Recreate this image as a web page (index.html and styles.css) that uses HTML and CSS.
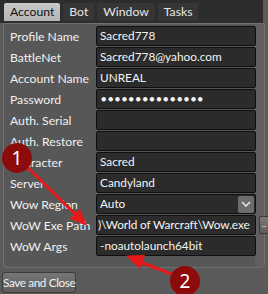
FILE: index.html
```html
<!DOCTYPE html>
<html>
<head>
<meta charset="utf-8">
<link rel="stylesheet" href="styles.css">
</head>
<body>
<div class="window">
  <div class="tabbar">
    <div class="tab active">Account</div>
    <div class="tab">Bot</div>
    <div class="tab">Window</div>
    <div class="tab">Tasks</div>
  </div>
  <div class="panel">
    <div class="form">
      <div class="label">Profile Name</div><div class="field">Sacred778</div><div></div>
      <div class="label">BattleNet</div><div class="field">Sacred778@yahoo.com</div><div></div>
      <div class="label">Account Name</div><div class="field">UNREAL</div><div></div>
      <div class="label">Password</div><div class="field dots">●●●●●●●●●●●●●●●</div><div></div>
      <div class="label">Auth. Serial</div><div class="field"></div><div></div>
      <div class="label">Auth. Restore</div><div class="field"></div><div></div>
      <div class="label">Character</div><div class="field">Sacred</div><div></div>
      <div class="label">Server</div><div class="field">Candyland</div><div></div>
      <div class="label">Wow Region</div>
      <div class="field combo"><span>Auto</span><span class="drop"><svg width="10" height="6" viewBox="0 0 10 6"><path d="M1 1 L5 5 L9 1" fill="none" stroke="#e6e6e6" stroke-width="1.6"/></svg></span></div><div></div>
      <div class="label">WoW Exe Path</div><div class="field path">)\World of Warcraft\Wow.exe</div><div class="browse">...</div>
      <div class="label">WoW Args</div><div class="field">-noautolaunch64bit</div><div></div>
    </div>
  </div>
  <div class="footer">
    <div class="btn">Save and Close</div>
  </div>
  <svg class="annot" width="268" height="294" viewBox="0 0 268 294">
    <g stroke="#e8191a" stroke-width="3" fill="#e8191a" stroke-linecap="round">
      <line x1="26" y1="166" x2="76" y2="215"/>
      <polygon points="86,225 70.5,218.5 79.5,209.5" stroke-width="1"/>
      <line x1="174" y1="275" x2="140" y2="262"/>
      <polygon points="127,256 144.5,255.5 139.5,268" stroke-width="1"/>
    </g>
    <circle cx="17" cy="158" r="15" fill="#8c0b0b"/>
    <text x="17" y="165" class="num">1</text>
    <circle cx="185" cy="281" r="15" fill="#8c0b0b"/>
    <text x="185" y="288" class="num">2</text>
  </svg>
</div>
</body>
</html>
```
FILE: styles.css
```css
* { box-sizing: border-box; }
html, body { margin: 0; padding: 0; }
body {
  width: 268px;
  height: 294px;
  overflow: hidden;
  background: #5a5a5a;
  font-family: Lato, "Open Sans", sans-serif;
  font-size: 12.2px;
  color: #ececec;
}
.window {
  position: relative;
  width: 268px;
  height: 294px;
}
.tabbar {
  width: 263px;
  height: 23px;
  background: #2d2d2d;
  display: flex;
  align-items: flex-start;
  padding: 3px 0 0 4px;
  gap: 3px;
}
.tab {
  height: 18px;
  line-height: 18px;
  padding: 0 6px;
  background: #363636;
  color: #e6e6e6;
  border-radius: 2px 2px 0 0;
}
.tab.active {
  background: linear-gradient(#c9c9c9, #b4b4b4);
  color: #111;
}
.panel {
  margin-left: 3px;
  width: 262px;
  height: 245px;
  border: 1px solid #707070;
  border-radius: 0 0 4px 4px;
  background: linear-gradient(to right, #575757 251px, #606060 251px);
  position: relative;
}
.form {
  display: grid;
  grid-template-columns: 83px 160px 10px;
  column-gap: 3px;
  grid-auto-rows: 20px;
  row-gap: 1px;
  padding: 2px 0 0 6px;
}
.label {
  display: flex;
  align-items: center;
  white-space: nowrap;
  color: #f0f0f0;
}
.field {
  background: #2b2b2b;
  border: 1px solid #0e0e0e;
  border-radius: 2px;
  padding: 0 3px;
  line-height: 18px;
  color: #f4f4f4;
  white-space: nowrap;
  overflow: hidden;
  font-size: 11.8px;
}
.dots {
  font-size: 9px;
  letter-spacing: 1.5px;
  padding-left: 4px;
}
.combo {
  display: flex;
  align-items: center;
  justify-content: space-between;
  padding: 0 1px 0 3px;
}
.drop {
  width: 16px;
  height: 17px;
  background: #6c6c6c;
  border-radius: 2px;
  display: flex;
  align-items: center;
  justify-content: center;
}
.path { padding-left: 1px; letter-spacing: -0.1px; }
.browse {
  height: 18px;
  margin-top: 1px;
  background: linear-gradient(#7a7a7a, #5e5e5e);
  border: 1px solid #3a3a3a;
  border-radius: 2px;
  font-size: 8px;
  letter-spacing: -0.5px;
  line-height: 14px;
  color: #eee;
  overflow: hidden;
  text-align: center;
  padding: 0;
}
.footer {
  padding: 4px 0 0 2px;
}
.btn {
  display: inline-block;
  height: 21px;
  width: 74px;
  line-height: 19px;
  background: linear-gradient(#767676, #5c5c5c);
  border: 1px solid #3c3c3c;
  border-radius: 3px;
  color: #f0f0f0;
  text-align: center;
  white-space: nowrap;
  letter-spacing: -0.4px;
  font-size: 11.8px;
}
.annot {
  position: absolute;
  left: 0;
  top: 0;
  pointer-events: none;
}
.num {
  fill: #ffffff;
  font-family: "Noto Sans", sans-serif;
  font-size: 19px;
  text-anchor: middle;
}
```
